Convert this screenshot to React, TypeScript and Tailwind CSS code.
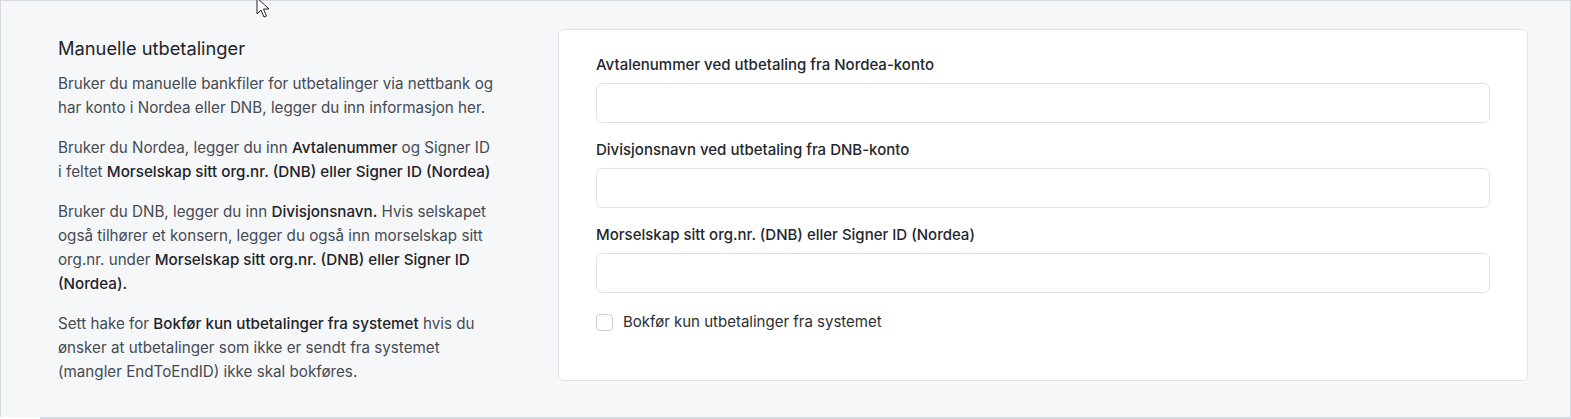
import React from "react";

const font = { fontFamily: "Inter, 'Noto Sans', sans-serif" };

function Field({ label }: { label: string }) {
  return (
    <div className="flex flex-col gap-2">
      <label className="text-[15px] font-medium leading-5 text-[#23272c]">{label}</label>
      <input
        type="text"
        className="h-10 w-full rounded-md border border-[#dfe3e8] bg-white px-3 text-[14px] outline-none"
      />
    </div>
  );
}

function B({ children }: { children: React.ReactNode }) {
  return <span className="font-medium text-[#1f2328]">{children}</span>;
}

export default function App() {
  return (
    <div className="relative min-h-screen bg-white" style={font}>
      {/* mouse pointer caught in the screenshot */}
      <svg
        className="pointer-events-none absolute left-[256px] top-[-3px] z-10"
        width="14"
        height="22"
        viewBox="0 0 14 22"
      >
        <path d="M1 1 L1 17 L5 13 L8 20 L10.5 19 L7.5 12 L13 12 Z" fill="#fff" stroke="#222" strokeWidth="1" strokeLinejoin="round" />
      </svg>

      <div className="h-[417px] border-x border-t border-[#d3d9df] bg-[#f5f7f9]">
        <div className="flex items-start pl-[57px] pr-[42px] pt-[28px]">
          <div className="w-[450px] shrink-0 whitespace-nowrap pt-[5px] text-[15.2px] leading-6 text-[#464b53]">
            <h2 className="mb-[10px] text-[18.3px] font-normal leading-7 text-[#1f2328]">Manuelle utbetalinger</h2>
            <p>
              Bruker du manuelle bankfiler for utbetalinger via nettbank og
              <br />
              har konto i Nordea eller DNB, legger du inn informasjon her.
            </p>
            <p className="mt-4">
              Bruker du Nordea, legger du inn <B>Avtalenummer</B> og Signer ID
              <br />i feltet <B>Morselskap sitt org.nr. (DNB) eller Signer ID (Nordea)</B>
            </p>
            <p className="mt-4">
              Bruker du DNB, legger du inn <B>Divisjonsnavn.</B> Hvis selskapet
              <br />
              også tilhører et konsern, legger du også inn morselskap sitt
              <br />
              org.nr. under <B>Morselskap sitt org.nr. (DNB) eller Signer ID</B>
              <br />
              <B>(Nordea).</B>
            </p>
            <p className="mt-4">
              Sett hake for <B>Bokfør kun utbetalinger fra systemet</B> hvis du
              <br />
              ønsker at utbetalinger som ikke er sendt fra systemet
              <br />
              (mangler EndToEndID) ikke skal bokføres.
            </p>
          </div>

          <div className="ml-[50px] flex h-[352px] flex-1 flex-col gap-[17px] rounded-md border border-[#dfe3e8] bg-white px-[37px] pt-[25px]">
            <Field label="Avtalenummer ved utbetaling fra Nordea-konto" />
            <Field label="Divisjonsnavn ved utbetaling fra DNB-konto" />
            <Field label="Morselskap sitt org.nr. (DNB) eller Signer ID (Nordea)" />
            <label className="mt-[2px] flex items-center gap-[10px] text-[15px] leading-5 text-[#2b2f35]">
              <input
                type="checkbox"
                className="h-[17px] w-[17px] appearance-none rounded-[4px] border border-[#c9ced4] bg-white"
              />
              Bokfør kun utbetalinger fra systemet
            </label>
          </div>
        </div>
      </div>
      <div className="ml-[40px] h-[2px] bg-[#d3d9df]" />
    </div>
  );
}
